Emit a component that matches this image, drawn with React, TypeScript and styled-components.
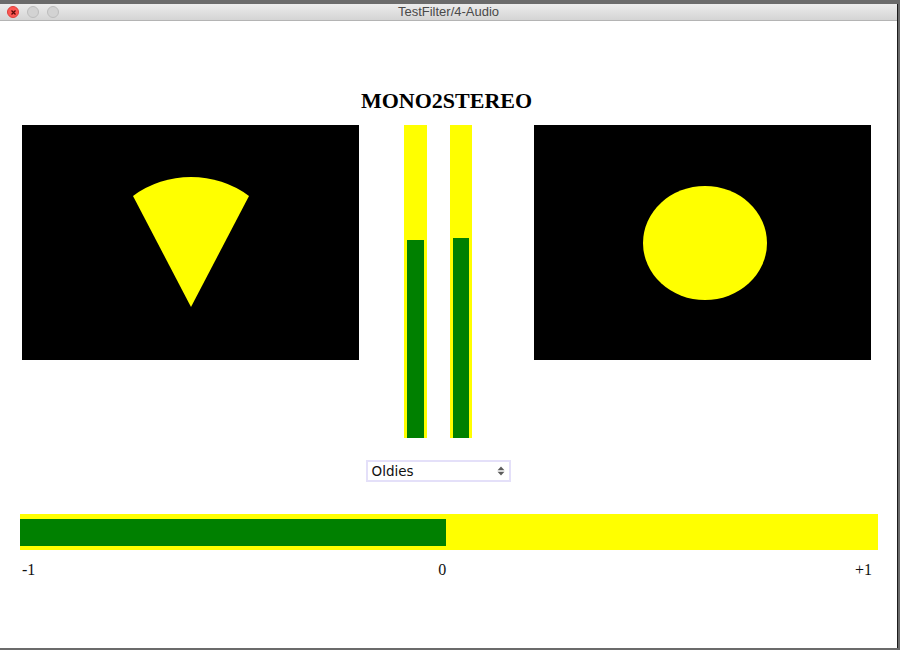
import React from "react";
import styled, { createGlobalStyle } from "styled-components";

const Global = createGlobalStyle`
  html, body {
    margin: 0;
    padding: 0;
    width: 900px;
    height: 650px;
    overflow: hidden;
    background: #6b6b6b;
  }
`;

const Window = styled.div`
  margin-top: 4px;
  width: 897px;
  height: 644px;
  background: #ffffff;
  border-right: 1px solid #1c1c1c;
  display: flex;
  flex-direction: column;
`;

const TitleBar = styled.div`
  position: relative;
  height: 16px;
  border-bottom: 1px solid #b4b4b4;
  background: linear-gradient(#ececec, #d4d4d4);
  display: flex;
  align-items: center;
  justify-content: center;
`;

const Lights = styled.div`
  position: absolute;
  left: 7px;
  top: 2px;
  display: flex;
  gap: 8px;
`;

const Light = styled.div<{ $red?: boolean }>`
  width: 12px;
  height: 12px;
  border-radius: 50%;
  box-sizing: border-box;
  background: ${(p) => (p.$red ? "#fc5753" : "#d3d3d3")};
  border: 1px solid ${(p) => (p.$red ? "#de3f3a" : "#bdbdbd")};
  display: flex;
  align-items: center;
  justify-content: center;
`;

const WindowTitle = styled.div`
  font-family: "Liberation Sans", Arial, sans-serif;
  font-size: 13px;
  color: #4a4a4a;
  line-height: 16px;
`;

const Content = styled.div`
  display: flex;
  flex-direction: column;
`;

const Heading = styled.h1`
  margin: 67px 0 0 0;
  width: 893px;
  text-align: center;
  font-family: "Liberation Serif", "Times New Roman", serif;
  font-weight: bold;
  font-size: 22px;
  line-height: 25px;
  color: #000;
`;

const MainRow = styled.div`
  margin-top: 12px;
  padding-left: 22px;
  display: flex;
  align-items: flex-start;
`;

const Scope = styled.div`
  width: 337px;
  height: 235px;
  background: #000;
  flex: none;
`;

const MidColumn = styled.div`
  width: 144px;
  margin: 0 24px 0 7px;
  display: flex;
  flex-direction: column;
  align-items: center;
  flex: none;
`;

const Meters = styled.div`
  display: flex;
  gap: 23px;
  height: 313px;
`;

const Meter = styled.div<{ $w: number }>`
  width: ${(p) => p.$w}px;
  height: 313px;
  background: #ffff00;
  display: flex;
  align-items: flex-end;
  padding: 0 3px 0 2.5px;
  box-sizing: border-box;
`;

const MeterFill = styled.div`
  width: 100%;
  background: #008000;
`;

const SelectBox = styled.div`
  margin-top: 22px;
  width: 145px;
  height: 22px;
  box-sizing: border-box;
  border: 2px solid #e4e0f9;
  background: #fff;
  display: flex;
  align-items: center;
  justify-content: space-between;
  padding: 0 4px 0 4px;
  font-family: "DejaVu Sans", "Liberation Sans", sans-serif;
  font-size: 13.5px;
  color: #111;
`;

const BarSection = styled.div`
  margin: 32px 0 0 20px;
  width: 858px;
`;

const Bar = styled.div`
  height: 36px;
  background: #ffff00;
  display: flex;
  align-items: center;
`;

const BarFill = styled.div`
  height: 27px;
  background: #008000;
`;

const Scale = styled.div`
  margin-top: 11px;
  display: flex;
  justify-content: space-between;
  padding: 0 6px 0 2px;
  font-family: "Liberation Serif", "Times New Roman", serif;
  font-size: 16px;
  line-height: 18px;
  color: #111;
`;

const MidLabel = styled.span`
  margin-right: 6px;
`;

export default function App() {
  const left = 198;
  const right = 200;
  const balance = 426 / 858;
  return (
    <>
      <Global />
      <Window>
        <TitleBar>
          <Lights>
            <Light $red>
              <svg width="7" height="7" viewBox="0 0 7 7">
                <path d="M1.5 1.5 L5.5 5.5 M5.5 1.5 L1.5 5.5" stroke="#5a0a08" strokeWidth="1.3" />
              </svg>
            </Light>
            <Light />
            <Light />
          </Lights>
          <WindowTitle>TestFilter/4-Audio</WindowTitle>
        </TitleBar>
        <Content>
          <Heading>MONO2STEREO</Heading>
          <MainRow>
            <Scope>
              <svg width="337" height="235" viewBox="0 0 337 235">
                <path d="M169 182 L111 71 A98 98 0 0 1 227 71 Z" fill="#ffff00" />
              </svg>
            </Scope>
            <MidColumn>
              <Meters>
                <Meter $w={23}>
                  <MeterFill style={{ height: left }} />
                </Meter>
                <Meter $w={22}>
                  <MeterFill style={{ height: right }} />
                </Meter>
              </Meters>
              <SelectBox>
                <span>Oldies</span>
                <svg width="8" height="10" viewBox="0 0 8 10">
                  <path d="M4 0.5 L7.5 4.2 L0.5 4.2 Z" fill="#5c5c5c" />
                  <path d="M4 9.5 L7.5 5.8 L0.5 5.8 Z" fill="#5c5c5c" />
                </svg>
              </SelectBox>
            </MidColumn>
            <Scope>
              <svg width="337" height="235" viewBox="0 0 337 235">
                <ellipse cx="171" cy="118" rx="62" ry="57" fill="#ffff00" />
              </svg>
            </Scope>
          </MainRow>
          <BarSection>
            <Bar>
              <BarFill style={{ width: `${balance * 100}%` }} />
            </Bar>
            <Scale>
              <span>-1</span>
              <MidLabel>0</MidLabel>
              <span>+1</span>
            </Scale>
          </BarSection>
        </Content>
      </Window>
    </>
  );
}
